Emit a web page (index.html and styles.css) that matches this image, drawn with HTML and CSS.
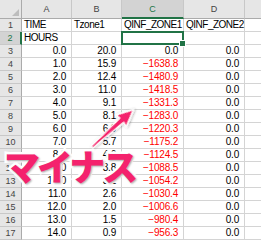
FILE: index.html
```html
<!DOCTYPE html>
<html lang="ja">
<head>
<meta charset="utf-8">
<link rel="stylesheet" href="styles.css">
</head>
<body>
<div class="sheet">
  <div class="grid">
    <div class="corner"><span class="tri"></span></div>
    <div class="ch">A</div><div class="ch">B</div><div class="ch sel">C</div><div class="ch">D</div><div class="ch last"></div>

    <div class="rh">1</div><div class="c t">TIME</div><div class="c t">Tzone1</div><div class="c t">QINF_ZONE1</div><div class="c t">QINF_ZONE2</div><div class="c"></div>
    <div class="rh sel">2</div><div class="c t">HOURS</div><div class="c"></div><div class="c active"><span class="handle"></span></div><div class="c"></div><div class="c"></div>

    <div class="rh">3</div><div class="c n">0.0</div><div class="c n">20.0</div><div class="c n">0.0</div><div class="c n">0.0</div><div class="c"></div>
    <div class="rh">4</div><div class="c n">1.0</div><div class="c n">15.9</div><div class="c n neg">−1638.8</div><div class="c n">0.0</div><div class="c"></div>
    <div class="rh">5</div><div class="c n">2.0</div><div class="c n">12.4</div><div class="c n neg">−1480.9</div><div class="c n">0.0</div><div class="c"></div>
    <div class="rh">6</div><div class="c n">3.0</div><div class="c n">11.0</div><div class="c n neg">−1418.5</div><div class="c n">0.0</div><div class="c"></div>
    <div class="rh">7</div><div class="c n">4.0</div><div class="c n">9.1</div><div class="c n neg">−1331.3</div><div class="c n">0.0</div><div class="c"></div>
    <div class="rh">8</div><div class="c n">5.0</div><div class="c n">8.1</div><div class="c n neg">−1283.0</div><div class="c n">0.0</div><div class="c"></div>
    <div class="rh">9</div><div class="c n">6.0</div><div class="c n">6.9</div><div class="c n neg">−1220.3</div><div class="c n">0.0</div><div class="c"></div>
    <div class="rh">10</div><div class="c n">7.0</div><div class="c n">5.7</div><div class="c n neg">−1175.2</div><div class="c n">0.0</div><div class="c"></div>
    <div class="rh">11</div><div class="c n">8.0</div><div class="c n">4.6</div><div class="c n neg">−1124.5</div><div class="c n">0.0</div><div class="c"></div>
    <div class="rh">12</div><div class="c n">9.0</div><div class="c n">3.8</div><div class="c n neg">−1088.5</div><div class="c n">0.0</div><div class="c"></div>
    <div class="rh">13</div><div class="c n">10.0</div><div class="c n">3.1</div><div class="c n neg">−1054.2</div><div class="c n">0.0</div><div class="c"></div>
    <div class="rh">14</div><div class="c n">11.0</div><div class="c n">2.6</div><div class="c n neg">−1030.4</div><div class="c n">0.0</div><div class="c"></div>
    <div class="rh">15</div><div class="c n">12.0</div><div class="c n">2.0</div><div class="c n neg">−1006.6</div><div class="c n">0.0</div><div class="c"></div>
    <div class="rh">16</div><div class="c n">13.0</div><div class="c n">1.5</div><div class="c n neg">−980.4</div><div class="c n">0.0</div><div class="c"></div>
    <div class="rh">17</div><div class="c n">14.0</div><div class="c n">0.9</div><div class="c n neg">−956.3</div><div class="c n">0.0</div><div class="c"></div>
  </div>

  <svg class="arrow" width="261" height="243" viewBox="0 0 261 243">
    <defs>
      <filter id="sh" x="-20%" y="-20%" width="140%" height="140%">
        <feDropShadow dx="0.6" dy="0.8" stdDeviation="0.8" flood-color="#000" flood-opacity="0.35"/>
      </filter>
    </defs>
    <g transform="translate(92 147) rotate(-42)" filter="url(#sh)">
      <polygon points="0,-1.2 40,-3 39,-8 56,0 39,8 40,3 0,1.2" fill="#f4226d" stroke="#fff" stroke-width="1.4" stroke-linejoin="round"/>
    </g>
  </svg>
  <div class="label">マイナス</div>
</div>
</body>
</html>
```

FILE: styles.css
```css
html, body {
  margin: 0;
  padding: 0;
  background: #fff;
  overflow: hidden;
}

.sheet {
  position: relative;
  width: 261px;
  height: 243px;
  overflow: hidden;
  font-family: "Liberation Sans", Arial, sans-serif;
  font-size: 10px;
  color: #000;
}

.grid {
  display: grid;
  grid-template-columns: 22px 50px 50px 62px 61px 40px;
  grid-template-rows: 19px repeat(17, 13px);
}

.corner {
  background: #e6e6e6;
  border-right: 1px solid #ababab;
  border-bottom: 1px solid #ababab;
  box-sizing: border-box;
  position: relative;
}

.tri {
  position: absolute;
  right: 2px;
  bottom: 2px;
  width: 0;
  height: 0;
  border-left: 7px solid transparent;
  border-bottom: 7px solid #bdbdbd;
}

.ch {
  background: #e6e6e6;
  border-right: 1px solid #c8c8c8;
  border-bottom: 1px solid #ababab;
  box-sizing: border-box;
  color: #444;
  text-align: center;
  line-height: 19px;
  font-size: 9px;
}

.ch.sel {
  background: #d3d3d3;
  color: #217346;
  border-bottom: 2px solid #217346;
}

.rh {
  background: #e6e6e6;
  border-right: 1px solid #ababab;
  border-bottom: 1px solid #c8c8c8;
  box-sizing: border-box;
  color: #444;
  text-align: center;
  line-height: 13px;
  font-size: 9px;
}

.rh.sel {
  background: #d3d3d3;
  color: #217346;
  border-right: 2px solid #217346;
}

.c {
  border-right: 1px solid #d4d4d4;
  border-bottom: 1px solid #d4d4d4;
  box-sizing: border-box;
  padding: 0 2px;
  line-height: 12px;
  white-space: nowrap;
  overflow: visible;
  letter-spacing: -0.2px;
}

.t {
  letter-spacing: -0.5px;
}

.n {
  text-align: right;
  padding-right: 5px;
}

.neg {
  color: #ff0000;
}

.active {
  position: relative;
  border: 2px solid #217346;
  margin: -1px 0 0 -1px;
}

.handle {
  position: absolute;
  right: -4px;
  bottom: -4px;
  width: 5px;
  height: 5px;
  background: #217346;
  border: 1px solid #fff;
}

.arrow {
  position: absolute;
  left: 0;
  top: 0;
  pointer-events: none;
}

.label {
  position: absolute;
  left: 4px;
  top: 144px;
  font-family: "Noto Sans CJK JP", sans-serif;
  font-weight: 900;
  font-size: 36px;
  line-height: 42px;
  letter-spacing: -3px;
  white-space: nowrap;
  color: #f4226d;
  -webkit-text-stroke: 5px #fff;
  paint-order: stroke fill;
  text-shadow: 1px 1px 2px rgba(0, 0, 0, 0.35);
}
```
